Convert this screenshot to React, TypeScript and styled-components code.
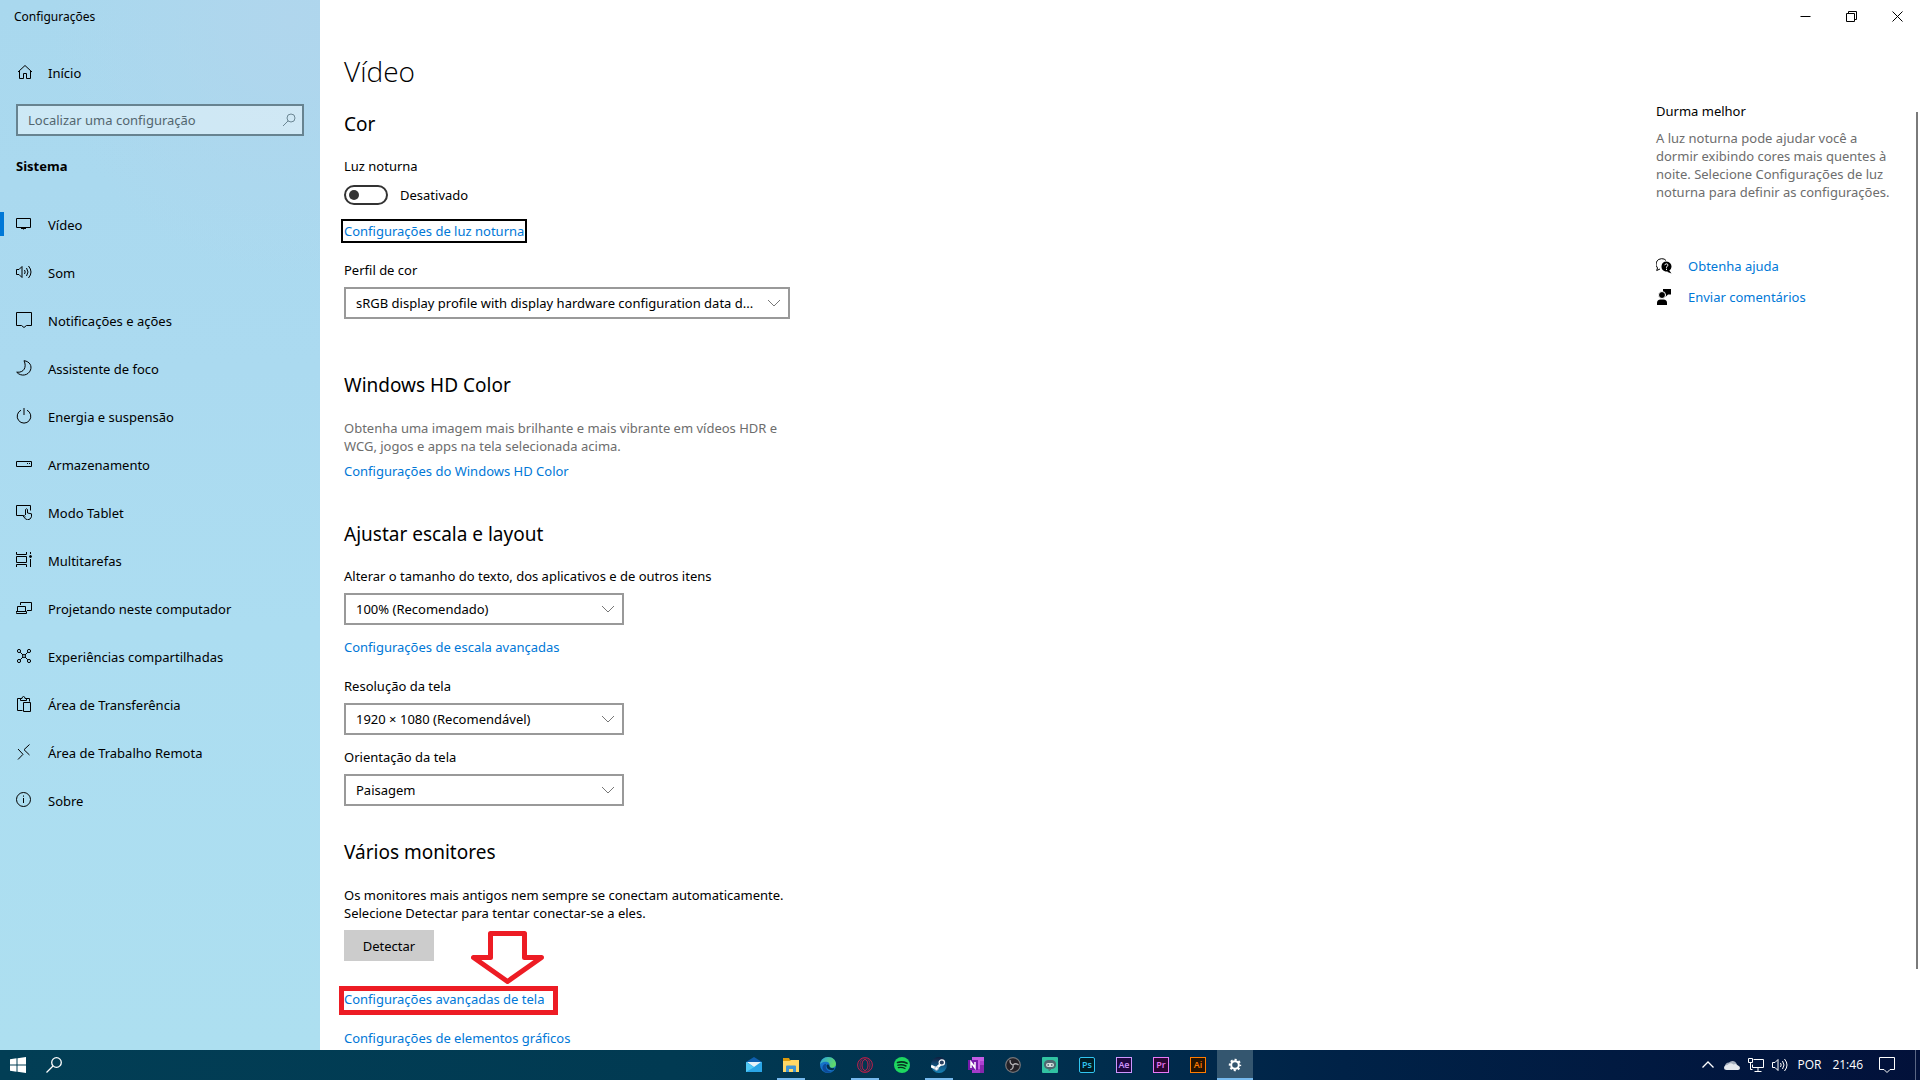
import React from "react";
import styled, { createGlobalStyle } from "styled-components";

const font = '"Noto Sans", "Open Sans", sans-serif';

const GlobalStyle = createGlobalStyle`
  * { box-sizing: border-box; }
  body { margin: 0; background: #fff; color: #000; font: 13px/18px ${font}; }
  button, input, select { font: inherit; color: inherit; }
`;

const Screen = styled.div`
  display: flex;
  flex-direction: column;
  height: 100vh;
  overflow: hidden;
`;

const Window = styled.div`
  display: flex;
  flex: 1;
  min-height: 0;
`;

const Sidebar = styled.aside`
  flex: 0 0 320px;
  background:
    radial-gradient(ellipse 240px 260px at 290px 20px, #b0d6ed 0%, rgba(176, 214, 237, 0) 100%),
    linear-gradient(180deg, #a9d8ee 0%, #abdaf0 35%, #acddf1 60%, #addff0 100%);
`;

const AppName = styled.div`
  padding: 8px 14px;
  font-size: 12px;
  line-height: 18px;
`;

const NavRow = styled.a`
  position: relative;
  display: flex;
  align-items: center;
  gap: 16px;
  height: 48px;
  padding: 0 16px;
  color: #000;
  text-decoration: none;
  &[aria-current]::before {
    content: "";
    position: absolute;
    left: 0;
    top: 12px;
    width: 4px;
    height: 24px;
    background: #0078d7;
  }
`;

const NavText = styled.span`
  padding-top: 2px;
`;

const HomeArea = styled.div`
  padding: 14px 0 8px;
`;

const SearchBox = styled.div`
  display: flex;
  align-items: center;
  height: 32px;
  margin: 0 16px;
  padding: 0 6px 0 10px;
  border: 2px solid #678390;
  background: rgba(255, 255, 255, 0.42);
  color: #6c8794;
`;

const SearchInput = styled.input`
  flex: 1;
  min-width: 0;
  padding: 0;
  border: 0;
  outline: 0;
  background: transparent;
  &::placeholder { color: #53666f; opacity: 1; }
`;

const SectionName = styled.h2`
  margin: 0;
  padding: 21px 16px 25px;
  font-size: 13px;
  font-weight: 700;
  line-height: 18px;
`;

const Main = styled.main`
  position: relative;
  display: flex;
  flex: 1;
  justify-content: space-between;
  min-width: 0;
  overflow: hidden;
`;

const Content = styled.div`
  display: flex;
  flex-direction: column;
  align-items: flex-start;
  width: 446px;
  margin: 51px 0 0 24px;
`;

const PageTitle = styled.h1`
  margin: 0;
  font-family: "Open Sans", sans-serif;
  font-size: 28px;
  font-weight: 300;
  line-height: 40px;
`;

const Group = styled.section<{ $space: number }>`
  display: flex;
  flex-direction: column;
  align-items: flex-start;
  width: 100%;
  margin-top: ${(p) => p.$space}px;
`;

const GroupTitle = styled.h2`
  margin: 0 0 19px;
  font-size: 19px;
  font-weight: 400;
  line-height: 28px;
`;

const Label = styled.label`
  margin-bottom: 8px;
  white-space: nowrap;
`;

const Text = styled.p<{ $muted?: boolean }>`
  margin: 1px 0 7px;
  color: ${(p) => (p.$muted ? "#6d6d6d" : "#000")};
  white-space: nowrap;
`;

const Link = styled.a<{ $focused?: boolean }>`
  color: #0078d7;
  text-decoration: none;
  white-space: nowrap;
  outline: ${(p) => (p.$focused ? "2px solid #000" : "none")};
  outline-offset: 1px;
`;

const ToggleRow = styled.div`
  display: flex;
  align-items: center;
  gap: 12px;
  height: 20px;
  margin: 2px 0 17px;
`;

const Toggle = styled.input`
  display: flex;
  align-items: center;
  appearance: none;
  width: 44px;
  height: 20px;
  margin: 0;
  padding-left: 3px;
  border: 2px solid #333;
  border-radius: 10px;
  &::before {
    content: "";
    width: 10px;
    height: 10px;
    border-radius: 50%;
    background: #333;
  }
`;

const Field = styled.div<{ $space?: number }>`
  display: flex;
  flex-direction: column;
  margin-top: ${(p) => p.$space ?? 0}px;
`;

const SelectWrap = styled.div<{ $wide?: boolean }>`
  display: grid;
  align-items: center;
  width: ${(p) => (p.$wide ? 446 : 280)}px;
  > * { grid-area: 1 / 1; }
  > svg { justify-self: end; margin-right: 9px; pointer-events: none; }
`;

const Select = styled.select`
  appearance: none;
  width: 100%;
  height: 32px;
  padding: 0 10px;
  border: 2px solid #999;
  border-radius: 0;
  background: #fff;
`;

const LinkLine = styled.div<{ $space: number }>`
  position: relative;
  display: flex;
  margin-top: ${(p) => p.$space}px;
`;

const DetectButton = styled.button`
  width: 90px;
  height: 31px;
  margin-top: 1px;
  padding: 0;
  border: 0;
  background: #ccc;
`;

const RedFrame = styled.span`
  position: absolute;
  left: -5px;
  top: -4px;
  width: 219px;
  height: 29px;
  border: 5px solid #ed1c24;
  pointer-events: none;
`;

const RedArrow = styled.svg`
  position: absolute;
  left: 127px;
  top: -59px;
`;

const Side = styled.div`
  width: 264px;
`;

const WindowButtons = styled.div`
  display: flex;
  justify-content: flex-end;
  margin-bottom: 70px;
`;

const WindowButton = styled.button`
  display: grid;
  place-items: center;
  width: 46px;
  height: 32px;
  padding: 0;
  border: 0;
  background: transparent;
`;

const SideTitle = styled.h3`
  margin: 0 0 9px;
  font-size: 13px;
  font-weight: 400;
`;

const HelpLinks = styled.div`
  display: flex;
  flex-direction: column;
  gap: 13px;
  margin-top: 56px;
`;

const HelpRow = styled.div`
  display: flex;
  align-items: center;
  gap: 16px;
`;

const ScrollThumb = styled.div`
  position: absolute;
  right: 2px;
  top: 112px;
  bottom: 81px;
  width: 2px;
  background: #7a7a7a;
`;

const Taskbar = styled.footer`
  display: grid;
  grid-template-columns: 1fr auto 1fr;
  flex: 0 0 30px;
  background: linear-gradient(90deg, #023e55 0%, #013a52 35%, #002f4e 55%, #002247 70%, #02113a 100%);
  color: #fff;
`;

const StartGroup = styled.div`
  display: flex;
  align-items: center;
`;

const TaskButton = styled.button`
  display: grid;
  place-items: center;
  width: 36px;
  height: 30px;
  padding: 0;
  border: 0;
  background: transparent;
`;

const Apps = styled.div`
  display: flex;
  gap: 1px;
  padding-left: 69px;
`;

const AppButton = styled(TaskButton)<{ $state?: "open" | "active" }>`
  background: ${(p) => (p.$state === "active" ? "#34566f" : "transparent")};
  position: relative;
  &::after {
    content: "";
    display: ${(p) => (p.$state ? "block" : "none")};
    position: absolute;
    bottom: 0;
    left: ${(p) => (p.$state === "active" ? 0 : 4)}px;
    right: ${(p) => (p.$state === "active" ? 0 : 4)}px;
    height: 2px;
    background: #76b9ed;
  }
`;

const AdobeTile = styled.span<{ $ink: string; $fill: string; $round?: boolean }>`
  display: grid;
  place-items: center;
  width: 16px;
  height: 16px;
  border: 1px solid ${(p) => p.$ink};
  border-radius: ${(p) => (p.$round ? 2 : 0)}px;
  background: ${(p) => p.$fill};
  color: ${(p) => p.$ink};
  font-family: "Open Sans", sans-serif;
  font-size: 9px;
  font-weight: 600;
  line-height: 12px;
`;

const Tray = styled.div`
  display: flex;
  align-items: center;
  justify-content: flex-end;
  font-family: "Open Sans", sans-serif;
  font-size: 12px;
`;

const TrayIcons = styled.div`
  display: flex;
  gap: 8px;
  margin-right: 9px;
`;

const Clock = styled.time`
  margin: 0 16px 0 11px;
`;

const PeekLine = styled.span`
  width: 1px;
  height: 30px;
  margin: 0 4px 0 20px;
  background: #5a6684;
`;

const Icon = ({ children, size = 16, w = 1 }: { children: React.ReactNode; size?: number; w?: number }) => (
  <svg width={size} height={size} viewBox={`0 0 ${size} ${size}`} fill="none" stroke="currentColor" strokeWidth={w} aria-hidden="true">
    {children}
  </svg>
);

const Chevron = () => (
  <svg width="14" height="8" viewBox="0 0 14 8" fill="none" stroke="#777" aria-hidden="true">
    <path d="M1 1l6 6 6-6" />
  </svg>
);

const soundPaths = (
  <>
    <path d="M.5 5.5H3L6 2.5v11L3 10.500H.5z" />
    <path d="M8.500 6q1.400 2 0 4M10.500 4q3 4 0 8M12.500 2q5 6 0 12" />
  </>
);

const navItems: { name: string; icon: React.ReactNode }[] = [
  { name: "Vídeo", icon: <><path d="M.5 2.500h14v9H.5zM7.500 11.500v2" /><path d="M5 12.500h5" /></> },
  { name: "Som", icon: soundPaths },
  { name: "Notificações e ações", icon: <path d="M.5.5h15v13h-5L8 15.500l-2.500-2H.5z" /> },
  { name: "Assistente de foco", icon: <path d="M8 .7C14 1.500 16 6 14.500 10 12.500 15.500 5 17 .7 12.200 8 13 11 7 8 .7z" /> },
  { name: "Energia e suspensão", icon: <><path d="M8 0v7" /><path d="M5 2.200a6.800 6.800 0 1 0 6 0" /></> },
  { name: "Armazenamento", icon: <><path d="M.5 5.500h15v5H.5z" /><path d="M11 7.500h1M13 7.500h1" /></> },
  { name: "Modo Tablet", icon: <><path d="M7 11.500H.5v-10h14v5" /><path d="M9.500 11V5.500q1-1.500 2 0V9l4 .8v3q-1 3-4 3-2 0-4.500-4 1-1 2.500 1" /></> },
  { name: "Multitarefas", icon: <><path d="M.5 0v2.500h10V0M.5 15v-2.500h10V15M.5 4.500h10v6H.5zM14.500 0v2M14.500 7v8" /><circle cx="14.500" cy="4.500" r="1" fill="currentColor" /></> },
  { name: "Projetando neste computador", icon: <><path d="M4.500 5V2.500h11v8H11" /><path d="M1.500 11V6.500h8V11M0 11.500h10.500v2H.5z" /></> },
  { name: "Experiências compartilhadas", icon: <><circle cx="3" cy="3" r="1.600" /><circle cx="13" cy="3" r="1.600" /><circle cx="3" cy="13" r="1.600" /><circle cx="13" cy="13" r="1.600" /><circle cx="8" cy="8" r="1.500" /><path d="M4.200 4.200L7 7M11.800 4.200L9 7M4.200 11.800L7 9M11.800 11.800L9 9" /></> },
  { name: "Área de Transferência", icon: <><path d="M6.500 14.500h-5v-12h3v2h6v-2h3v3" /><path d="M4.500 3.500v-1h1.500q0-2 1.500-2t1.500 2h1.500v1M7.500 6.500h7v9h-7z" /></> },
  { name: "Área de Trabalho Remota", icon: <path d="M2 5l5 5.300L2 15.500M13.500.5L8 5.700l5.500 5.300" /> },
  { name: "Sobre", icon: <><circle cx="7.500" cy="7.500" r="7" /><path d="M7.500 6v5M7.500 3.500v1.200" /></> },
];

const Dropdown = ({ id, label, value, wide, space }: { id: string; label: string; value: string; wide?: boolean; space?: number }) => (
  <Field $space={space}>
    <Label htmlFor={id}>{label}</Label>
    <SelectWrap $wide={wide}>
      <Select id={id}>
        <option>{value}</option>
      </Select>
      <Chevron />
    </SelectWrap>
  </Field>
);

const MailIcon = () => (
  <Icon>
    <g stroke="none">
      <path d="M0 5L8 0l8 5v3H0z" fill="#0f5fae" />
      <path d="M0 5h16v10H0z" fill="#2aa5e6" />
      <path d="M1 5h14l-7 5z" fill="#e8f2f8" />
      <path d="M0 5l8 5.200L0 15z" fill="#50c8f4" />
    </g>
  </Icon>
);
const FolderIcon = () => (
  <Icon>
    <g stroke="none">
      <path d="M0 1h6l1 2h9v2H0z" fill="#dc9a0c" />
      <path d="M0 4h7l1-1h8v12H0z" fill="#ffd766" />
      <path d="M3 15V9.500Q3 8.500 4 8.500h8q1 0 1 1V15h-3v-3H6v3z" fill="#3e94d4" />
    </g>
  </Icon>
);
const EdgeIcon = () => (
  <Icon>
    <defs>
      <linearGradient id="edgeTop" x1="0" x2="1" y1="0" y2="0.400">
        <stop offset="0" stopColor="#2aa4e0" />
        <stop offset="1" stopColor="#5fd96a" />
      </linearGradient>
    </defs>
    <g stroke="none">
      <circle cx="8" cy="8" r="8" fill="#1674c9" />
      <path d="M0 7.500C.5 3 4 0 8 0c5 0 8 3.500 8 7 0 2.500-2 3.800-4 3.800-2.200 0-3-.8-2.500-1.800C10.500 6 7.500 4.500 5 4.800 2.500 5 .8 6.200 0 7.500z" fill="url(#edgeTop)" />
      <path d="M6 8c-1 3.500 1.500 7 6.500 6.500C9 17 3.500 16 2.500 11.500 2 9 4 6.500 6.500 6.800 6.200 7.200 6 7.500 6 8z" fill="#0d4b9a" />
      <path d="M6.500 8.500c.3-1.500 2.500-1.500 2.800 0 .1 2 2.200 3 5.200 2.500l-1 2c-4 .8-7-1-7-4.500z" fill="#02304e" />
    </g>
  </Icon>
);
const OperaIcon = () => (
  <Icon>
    <g stroke="#c31f4d">
      <circle cx="8" cy="8" r="7.400" />
      <ellipse cx="8" cy="8" rx="5" ry="7.200" stroke="#8d2149" />
      <ellipse cx="8" cy="8" rx="3" ry="5.500" />
    </g>
  </Icon>
);
const SpotifyIcon = () => (
  <Icon>
    <circle cx="8" cy="8" r="8" fill="#1ed760" stroke="none" />
    <g stroke="#06301f" strokeLinecap="round">
      <path d="M3.500 5.500q5-1.500 9.500.8" strokeWidth="1.600" />
      <path d="M4 8.200q4-1.200 8 .8" strokeWidth="1.400" />
      <path d="M4.300 10.700q3.500-1 6.700.8" strokeWidth="1.200" />
    </g>
  </Icon>
);
const SteamIcon = () => (
  <Icon>
    <defs>
      <linearGradient id="steamBg" x1="0" x2="0" y1="0" y2="1">
        <stop offset="0" stopColor="#101d3d" />
        <stop offset="1" stopColor="#1683b8" />
      </linearGradient>
    </defs>
    <circle cx="8" cy="8" r="8" fill="url(#steamBg)" stroke="none" />
    <path d="M0 9l5 2.500 5.500-5" stroke="#fff" strokeWidth="2.600" />
    <circle cx="10.800" cy="5.500" r="2.700" fill="#2b4060" stroke="#fff" strokeWidth="1.200" />
    <circle cx="5.500" cy="11.500" r="1.800" fill="#fff" stroke="#aebccd" />
  </Icon>
);
const OneNoteIcon = () => (
  <Icon>
    <g stroke="none">
      <path d="M4 0h12v16H4z" fill="#c55ce4" />
      <path d="M12 4h4v4h-4z" fill="#ad40d2" />
      <path d="M12 8h4v8h-4z" fill="#8526ad" />
      <path d="M4 12h8v4H4z" fill="#a43cca" />
      <path d="M0 3h10v10H0z" fill="#7719aa" />
    </g>
    <path d="M3 11V5.200l4 5.600V5" stroke="#fff" strokeWidth="1.500" />
  </Icon>
);
const ObsIcon = () => (
  <Icon>
    <circle cx="8" cy="8" r="7.300" fill="#242127" stroke="#77777a" strokeWidth="1.200" />
    <g stroke="#b3b1b5" strokeWidth="1.300">
      <path d="M5.200 3.200Q4.500 7 8 8" />
      <path d="M5.200 3.200Q4.500 7 8 8" transform="rotate(120 8 8)" />
      <path d="M5.200 3.200Q4.500 7 8 8" transform="rotate(240 8 8)" />
    </g>
  </Icon>
);
const StreamlabsIcon = () => (
  <Icon>
    <rect width="16" height="16" rx="1" fill="#31c3a2" stroke="none" />
    <rect x="2.500" y="3.500" width="11" height="8" rx="3.500" fill="#4f6770" stroke="#4f6770" />
    <rect x="4" y="6" width="8" height="4" rx="2" fill="#d3dedc" stroke="none" />
    <path d="M5.500 8h1.500M9 8h1.500" stroke="#4f6770" strokeWidth="1.500" />
    <path d="M7 12v1.500l2-1.500" stroke="#4f6770" />
  </Icon>
);
const GearIcon = () => (
  <Icon>
    <circle cx="8" cy="8" r="3.800" stroke="#fff" strokeWidth="2" />
    <circle cx="8" cy="8" r="5.200" stroke="#fff" strokeWidth="2" strokeDasharray="2.080 2" strokeDashoffset="1.040" />
  </Icon>
);

const apps: { name: string; icon: React.ReactNode; state?: "open" | "active" }[] = [
  { name: "Email", icon: <MailIcon /> },
  { name: "Explorador de Arquivos", icon: <FolderIcon />, state: "open" },
  { name: "Edge", icon: <EdgeIcon /> },
  { name: "Opera", icon: <OperaIcon />, state: "open" },
  { name: "Spotify", icon: <SpotifyIcon /> },
  { name: "Steam", icon: <SteamIcon />, state: "open" },
  { name: "OneNote", icon: <OneNoteIcon /> },
  { name: "OBS", icon: <ObsIcon /> },
  { name: "Streamlabs", icon: <StreamlabsIcon /> },
  { name: "Photoshop", icon: <AdobeTile $ink="#31c5f0" $fill="#001d26" $round>Ps</AdobeTile> },
  { name: "After Effects", icon: <AdobeTile $ink="#cf96fd" $fill="#1f0740">Ae</AdobeTile> },
  { name: "Premiere", icon: <AdobeTile $ink="#e878f5" $fill="#2a0634">Pr</AdobeTile> },
  { name: "Illustrator", icon: <AdobeTile $ink="#ff7c00" $fill="#261300">Ai</AdobeTile> },
  { name: "Configurações", icon: <GearIcon />, state: "active" },
];

export default function App() {
  return (
    <Screen>
      <GlobalStyle />
      <Window>
        <Sidebar>
          <AppName>Configurações</AppName>
          <HomeArea>
            <NavRow href="#inicio">
              <Icon>
                <path d="M2 8L9 1.500 16 8M3.500 7v7.500h4v-5h3v5h4V7" />
              </Icon>
              <NavText>Início</NavText>
            </NavRow>
          </HomeArea>
          <SearchBox>
            <SearchInput type="text" aria-label="Localizar uma configuração" placeholder="Localizar uma configuração" />
            <Icon size={14}>
              <circle cx="9" cy="5" r="4" />
              <path d="M6.200 7.800L1 13" />
            </Icon>
          </SearchBox>
          <SectionName>Sistema</SectionName>
          <nav>
            {navItems.map((item, i) => (
              <NavRow key={item.name} href={`#item-${i}`} aria-current={i === 0 ? "page" : undefined}>
                <Icon>{item.icon}</Icon>
                <NavText>{item.name}</NavText>
              </NavRow>
            ))}
          </nav>
        </Sidebar>

        <Main>
          <Content>
            <PageTitle>Vídeo</PageTitle>

            <Group $space={19}>
              <GroupTitle>Cor</GroupTitle>
              <Label htmlFor="night">Luz noturna</Label>
              <ToggleRow>
                <Toggle type="checkbox" role="switch" id="night" />
                <span>Desativado</span>
              </ToggleRow>
              <Link href="#luz" $focused>Configurações de luz noturna</Link>
              <Dropdown id="profile" label="Perfil de cor" value="sRGB display profile with display hardware configuration data d..." wide space={21} />
            </Group>

            <Group $space={52}>
              <GroupTitle>Windows HD Color</GroupTitle>
              <Text $muted>
                Obtenha uma imagem mais brilhante e mais vibrante em vídeos HDR e
                <br />
                WCG, jogos e apps na tela selecionada acima.
              </Text>
              <Link href="#hd">Configurações do Windows HD Color</Link>
            </Group>

            <Group $space={40}>
              <GroupTitle>Ajustar escala e layout</GroupTitle>
              <Dropdown id="scale" label="Alterar o tamanho do texto, dos aplicativos e de outros itens" value="100% (Recomendado)" />
              <LinkLine $space={13}>
                <Link href="#escala">Configurações de escala avançadas</Link>
              </LinkLine>
              <Dropdown id="resolution" label="Resolução da tela" value="1920 × 1080 (Recomendável)" space={21} />
              <Dropdown id="orientation" label="Orientação da tela" value="Paisagem" space={13} />
            </Group>

            <Group $space={32}>
              <GroupTitle>Vários monitores</GroupTitle>
              <Text>
                Os monitores mais antigos nem sempre se conectam automaticamente.
                <br />
                Selecione Detectar para tentar conectar-se a eles.
              </Text>
              <DetectButton type="button">Detectar</DetectButton>
              <LinkLine $space={29}>
                <Link href="#avancadas">Configurações avançadas de tela</Link>
                <RedFrame />
                <RedArrow width="74" height="54" viewBox="0 0 74 54" fill="none" stroke="#ed1c24" strokeWidth="5" strokeLinejoin="round" aria-hidden="true">
                  <path d="M19.500 2.500h34v24H70.500L36.500 50.500 2.500 26.500H19.500z" />
                </RedArrow>
              </LinkLine>
              <LinkLine $space={21}>
                <Link href="#graficos">Configurações de elementos gráficos</Link>
              </LinkLine>
            </Group>
          </Content>

          <Side>
            <WindowButtons>
              <WindowButton type="button" aria-label="Minimizar">
                <Icon size={11}><path d="M.5 5.500h10" /></Icon>
              </WindowButton>
              <WindowButton type="button" aria-label="Restaurar">
                <Icon size={11}><path d="M.5 2.500h8v8h-8zM2.500 2.500v-2h8v8h-2" /></Icon>
              </WindowButton>
              <WindowButton type="button" aria-label="Fechar">
                <Icon size={11}><path d="M.5.5l10 10M10.500.5l-10 10" /></Icon>
              </WindowButton>
            </WindowButtons>
            <SideTitle>Durma melhor</SideTitle>
            <Text $muted>
              A luz noturna pode ajudar você a
              <br />
              dormir exibindo cores mais quentes à
              <br />
              noite. Selecione Configurações de luz
              <br />
              noturna para definir as configurações.
            </Text>
            <HelpLinks>
              <HelpRow>
                <Icon>
                  <path d="M1.500 10A5.500 5.500 0 0 1 5.500.700Q8.500.500 10 2.500M1.500 10L.7 12.500 4 11" />
                  <path d="M10.500 3.500a5 5 0 1 1-1 9.900A5 5 0 0 1 10.500 3.500zM13 12l2.500 3.500-4-1.500z" fill="currentColor" stroke="none" />
                  <path d="M8.800 7.200q.3-1.400 1.700-1.400 1.600.1 1.400 1.400-.2.800-1.400 1.800v.8M10.500 10.700v1.300" stroke="#fff" />
                </Icon>
                <Link href="#ajuda">Obtenha ajuda</Link>
              </HelpRow>
              <HelpRow>
                <Icon>
                  <g fill="currentColor" stroke="none">
                    <path d="M7 0h8v5.500h-3L9.500 8V5.500H7z" />
                    <circle cx="6" cy="6" r="3.500" stroke="#fff" strokeWidth="1" />
                    <path d="M1 16v-2q0-3.500 3.500-3.500h3Q11 10.500 11 14v2z" />
                  </g>
                </Icon>
                <Link href="#comentarios">Enviar comentários</Link>
              </HelpRow>
            </HelpLinks>
          </Side>
          <ScrollThumb />
        </Main>
      </Window>

      <Taskbar>
        <StartGroup>
          <TaskButton type="button" aria-label="Iniciar">
            <Icon>
              <path d="M0 2.200L6.500 1.300v6.200H0zM7.500 1.200L16 0v7.500H7.500zM0 8.500h6.500v6.200L0 13.800zM7.500 8.500H16V16l-8.500-1.200z" fill="#fff" stroke="none" />
            </Icon>
          </TaskButton>
          <TaskButton type="button" aria-label="Pesquisar">
            <Icon w={1.3}>
              <circle cx="10.500" cy="5.500" r="4.800" />
              <path d="M7 9L.5 15.500" />
            </Icon>
          </TaskButton>
        </StartGroup>
        <Apps>
          {apps.map((app) => (
            <AppButton key={app.name} type="button" aria-label={app.name} $state={app.state}>
              {app.icon}
            </AppButton>
          ))}
        </Apps>
        <Tray>
          <TrayIcons>
            <Icon w={1.3}><path d="M2.500 10.500L8 5l5.500 5.500" /></Icon>
            <Icon>
              <path d="M1 9A4 4 0 0 1 5 5.500 4.500 4.500 0 0 1 12.500 6.500L13 9z" fill="#a3adbd" stroke="none" />
              <path d="M0 11q0-3 3.500-3Q6 5 9.500 7.500 12 6 14 8.500q2 .5 2 2.500 0 2-2 2H2.500Q0 13 0 11z" fill="#e4e8ee" stroke="none" />
            </Icon>
            <Icon><path d="M5.500 2.500h10v8h-11v-3M10 10.500v4M6.500 14.500h7M.5 1.500h4v4h-4zM2.500 5.500v7h2" /></Icon>
            <Icon>{soundPaths}</Icon>
          </TrayIcons>
          <span>POR</span>
          <Clock>21:46</Clock>
          <Icon><path d="M.5.5h15v12h-4.500L8 15.500l-3-3H.5z" /></Icon>
          <PeekLine />
        </Tray>
      </Taskbar>
    </Screen>
  );
}
